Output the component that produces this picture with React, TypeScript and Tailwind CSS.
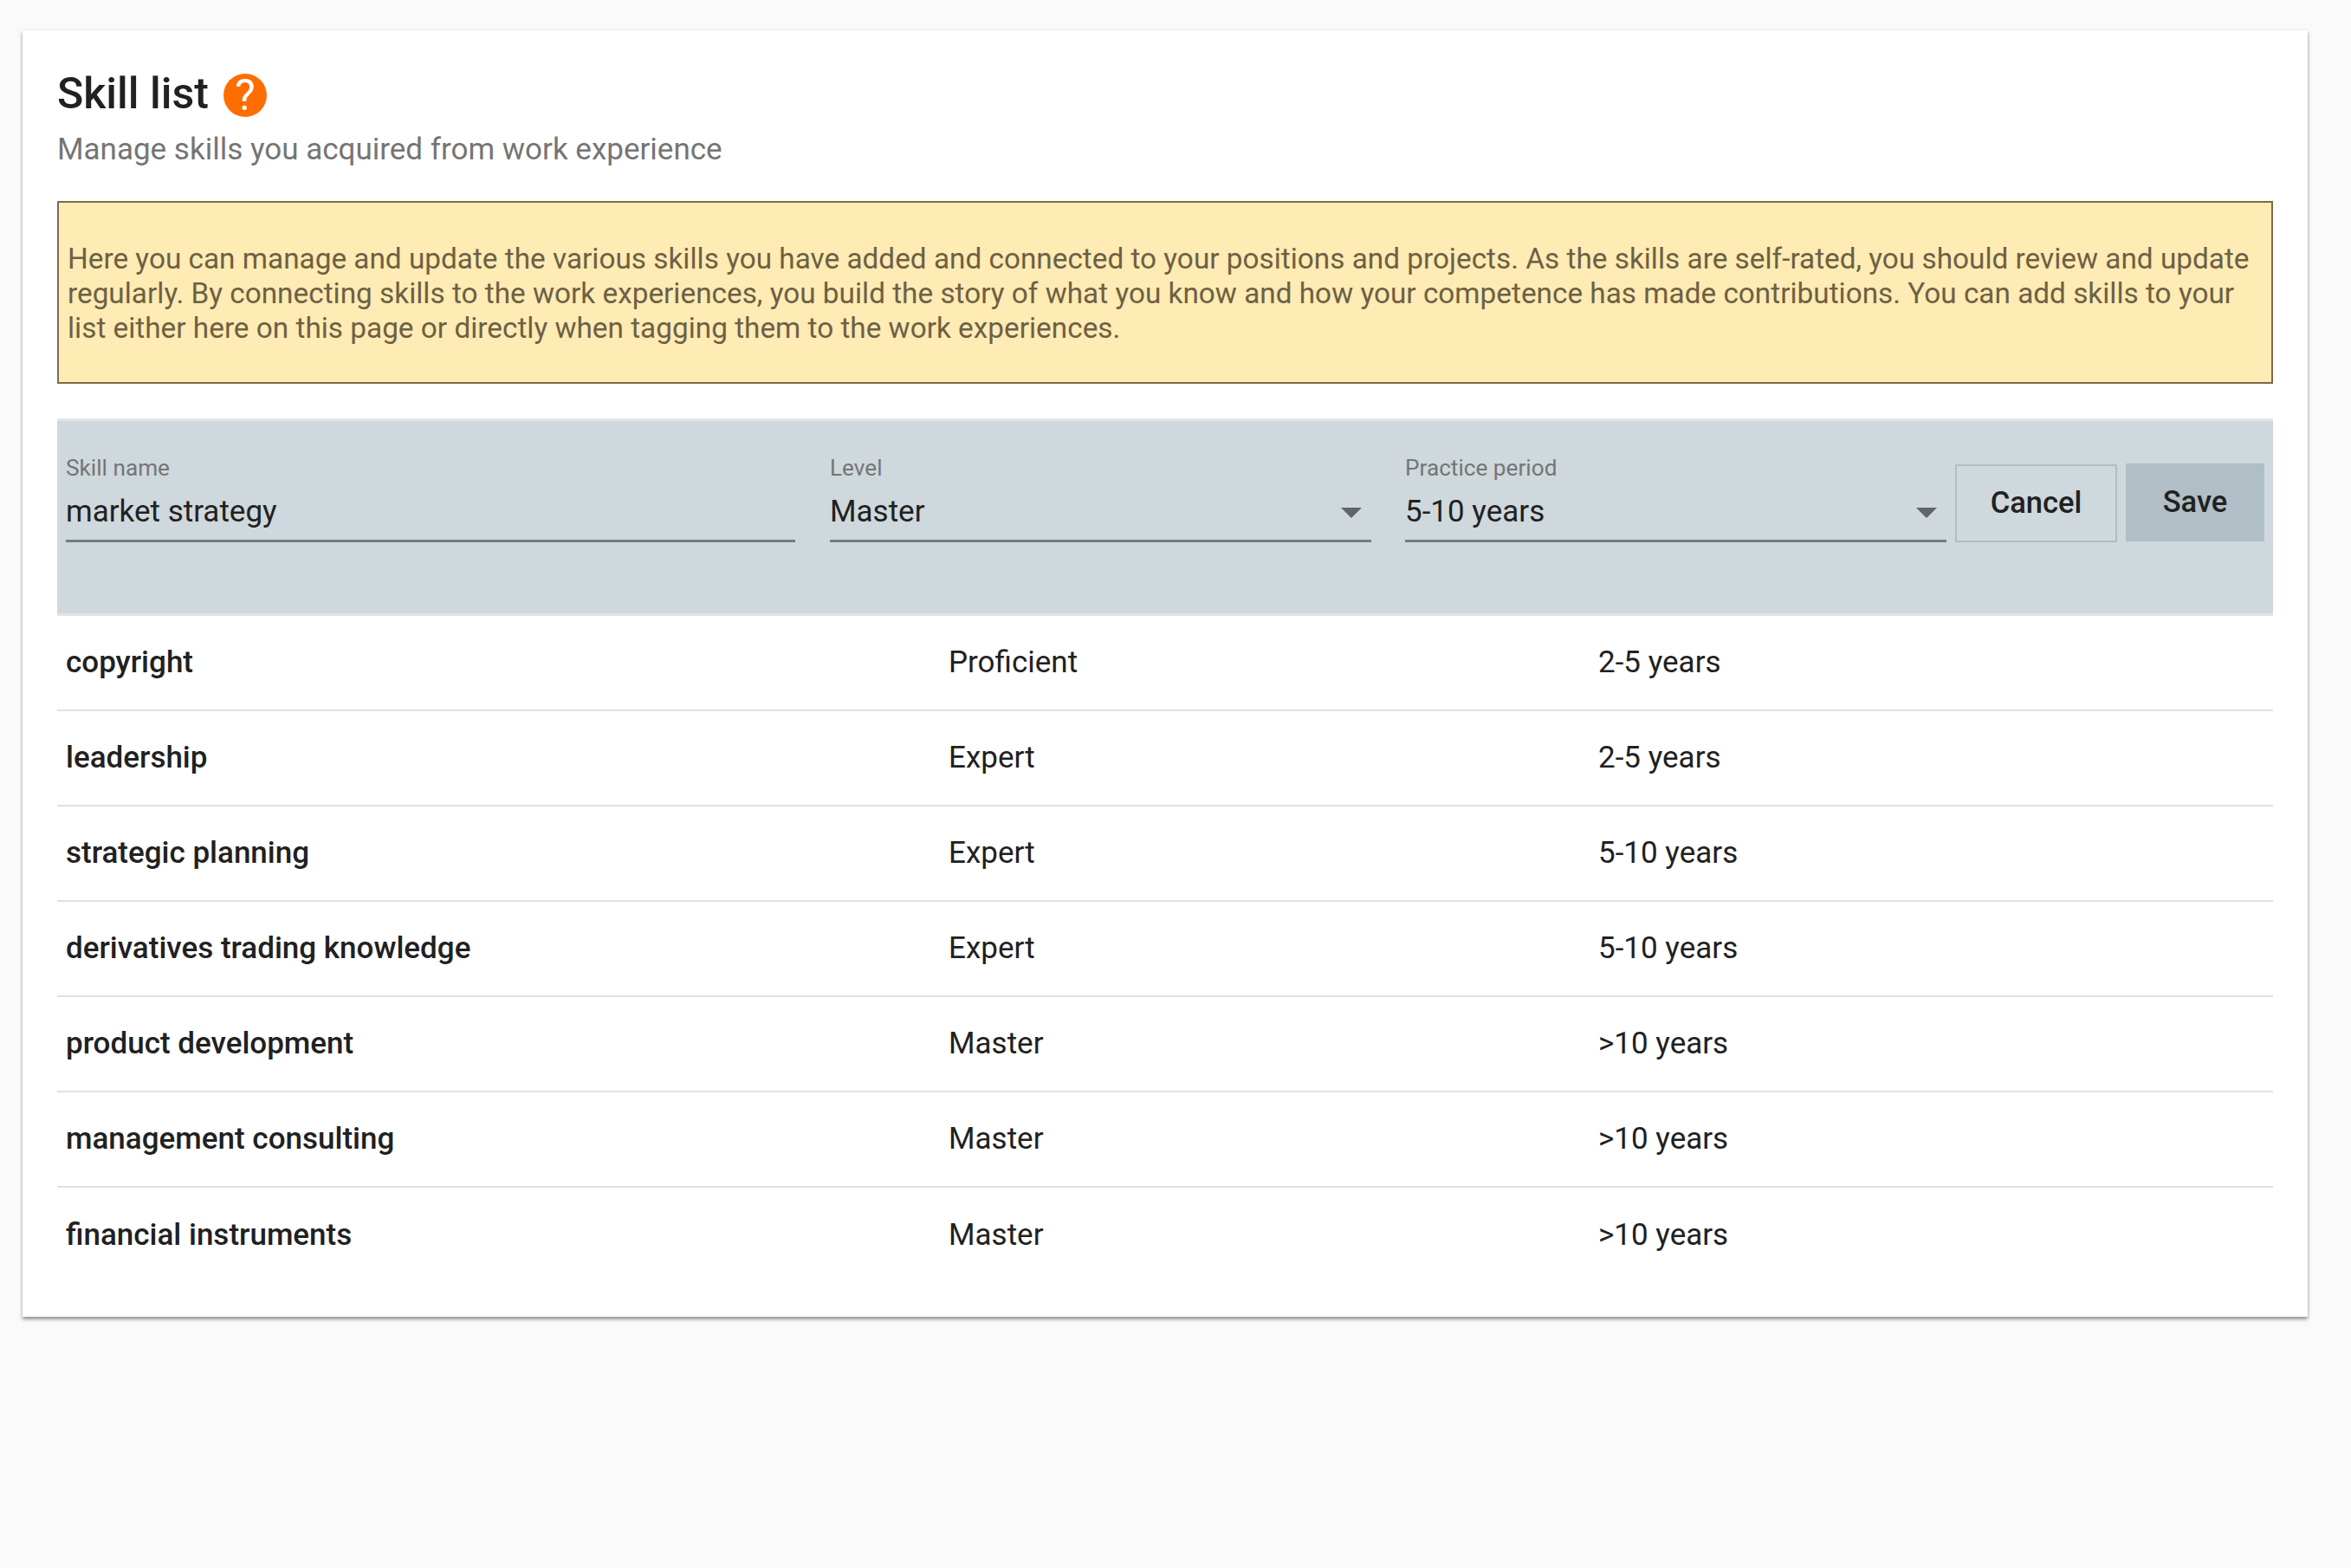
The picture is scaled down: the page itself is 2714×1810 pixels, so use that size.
const skills = [
  { name: "copyright", level: "Proficient", period: "2-5 years" },
  { name: "leadership", level: "Expert", period: "2-5 years" },
  { name: "strategic planning", level: "Expert", period: "5-10 years" },
  { name: "derivatives trading knowledge", level: "Expert", period: "5-10 years" },
  { name: "product development", level: "Master", period: ">10 years" },
  { name: "management consulting", level: "Master", period: ">10 years" },
  { name: "financial instruments", level: "Master", period: ">10 years" },
];

function SelectField({ label, value }: { label: string; value: string }) {
  return (
    <div className="w-[625px] shrink-0">
      <div className="text-[26.2px] leading-[30px] text-[#757575]">{label}</div>
      <div className="mt-[5px] flex h-[66px] items-center justify-between border-b-[3px] border-[#757c7e] pr-[11px] text-[35px] text-[#212121]">
        <span>{value}</span>
        <span className="h-0 w-0 border-x-[12px] border-t-[12px] border-x-transparent border-t-[#616566]" />
      </div>
    </div>
  );
}

export default function App() {
  return (
    <div className="min-h-[1810px] bg-[#fafafa] px-[26px] pt-[35px] font-['Roboto',sans-serif]">
      <div className="h-[1485px] w-[2638px] bg-white px-[40px] pt-[44px] shadow-[0_3px_4px_rgba(0,0,0,0.4),0_0_3px_rgba(0,0,0,0.08)]">
        <div className="flex items-center gap-[17px]">
          <h1 className="text-[50px] leading-[58px] font-medium text-[#212121]">Skill list</h1>
          <span className="mt-[4px] flex h-[50px] w-[50px] items-center justify-center rounded-full bg-[#ff6d00] text-[50px] leading-none text-white">?</span>
        </div>
        <p className="mt-[14px] text-[35px] leading-[44px] text-[#757575]">Manage skills you acquired from work experience</p>

        <div className="mt-[37px] h-[211px] w-[2558px] border-2 border-[#7a6c4a] bg-[#ffebb3] px-[10px] pt-[45px] text-[33.33px] leading-[40px] text-[#6d6044]">
          Here you can manage and update the various skills you have added and connected to your positions and projects. As the skills are self-rated, you should review and update regularly. By connecting skills to the work experiences, you build the story of what you know and how your competence has made contributions. You can add skills to your list either here on this page or directly when tagging them to the work experiences.
        </div>

        <div className="mt-[40px] flex h-[228px] items-start border-y-[3px] border-y-[#e0e4e6] bg-[#cfd8dc] pl-[10px] pt-[39px]">
          <div className="w-[842px] shrink-0">
            <div className="text-[26.2px] leading-[30px] text-[#757575]">Skill name</div>
            <div className="mt-[5px] flex h-[66px] items-center border-b-[3px] border-[#757c7e] text-[35px] text-[#212121]">market strategy</div>
          </div>
          <div className="ml-[40px]"><SelectField label="Level" value="Master" /></div>
          <div className="ml-[39px]"><SelectField label="Practice period" value="5-10 years" /></div>
          <button className="mt-[11px] ml-[10px] flex h-[90px] w-[187px] items-center justify-center border-2 border-[#b0bec5] text-[34.5px] font-medium text-[#212121]">Cancel</button>
          <button className="mt-[10px] ml-[10px] flex h-[90px] w-[160px] items-center justify-center bg-[#b0bec5] text-[34.5px] font-medium text-[#212121]">Save</button>
        </div>

        <div>
          {skills.map((s, i) => (
            <div key={s.name} className={`flex h-[110px] items-center pt-[1px] pl-[10px] text-[35px] text-[#212121] ${i < skills.length - 1 ? "border-b-2 border-[#e0e0e0]" : ""}`}>
              <div className="w-[1019px] font-medium">{s.name}</div>
              <div className="w-[750px]">{s.level}</div>
              <div>{s.period}</div>
            </div>
          ))}
        </div>
      </div>
    </div>
  );
}
